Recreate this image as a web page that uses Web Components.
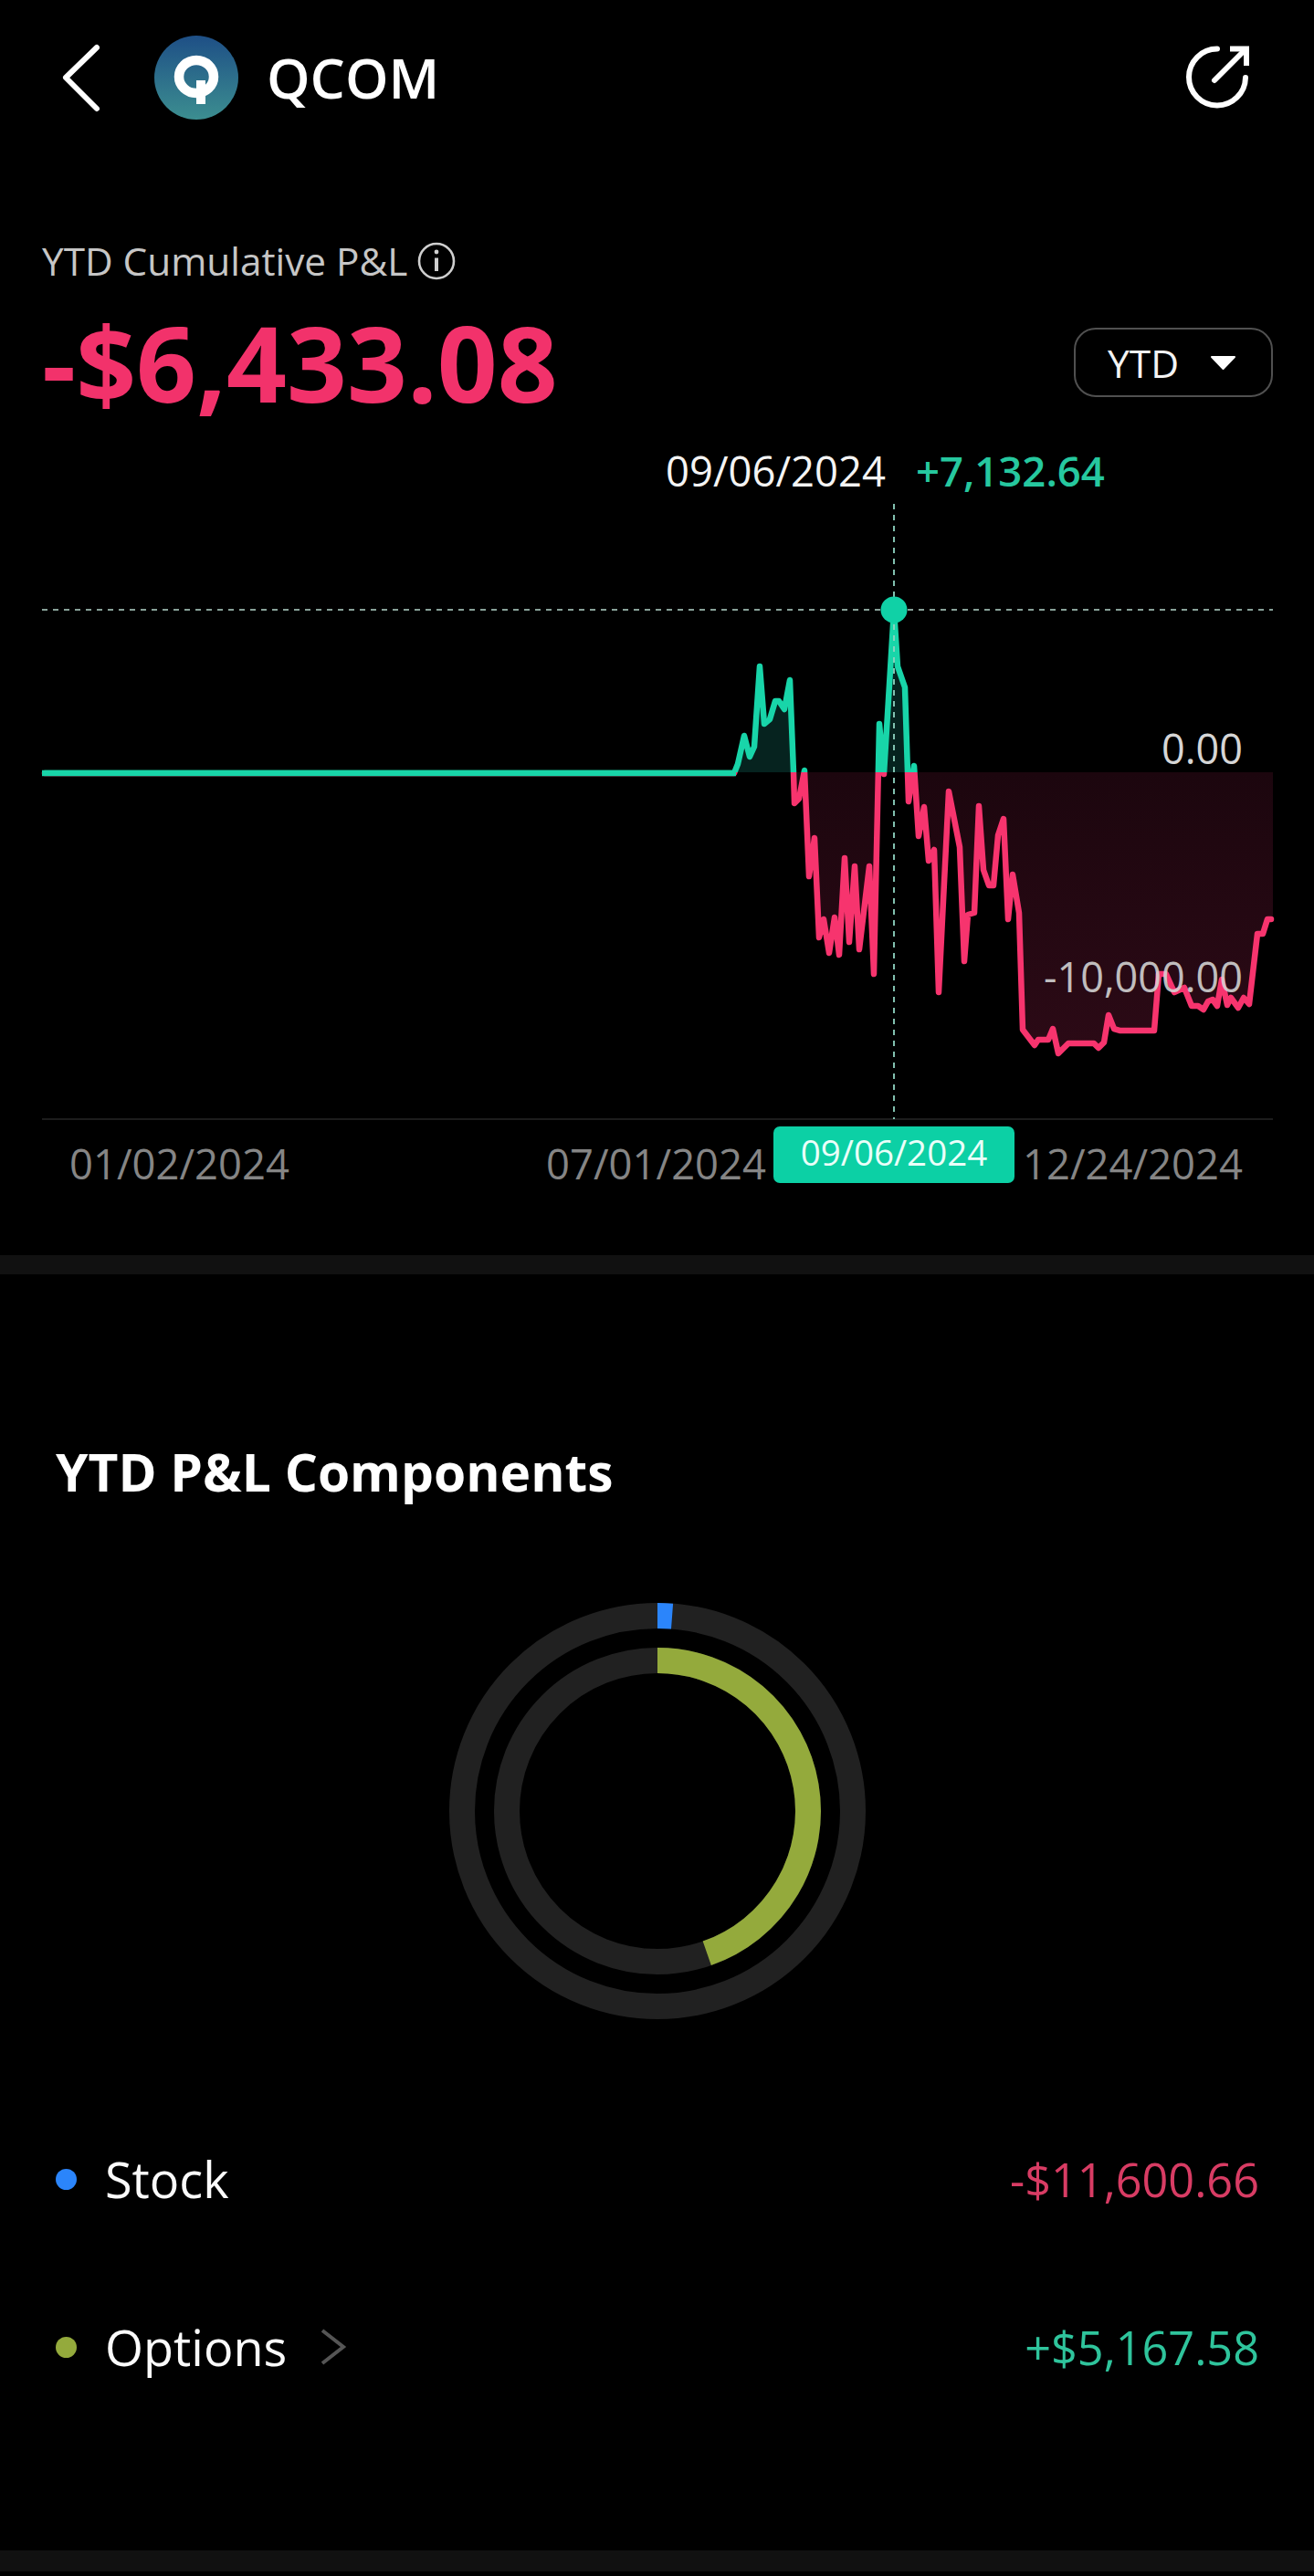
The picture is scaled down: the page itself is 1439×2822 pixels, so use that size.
<!DOCTYPE html>
<html>
<head>
<meta charset="utf-8">
<title>QCOM</title>
<style>
  html, body { margin: 0; background: #000; }
  body { font-family: "Open Sans", "Noto Sans", sans-serif; color: #fff; }
  .neg { color: #d83c64; }
  .pos { color: #2fc49c; }
</style>
</head>
<body>
<qc-header symbol="QCOM"></qc-header>
<pnl-summary label="YTD Cumulative P&amp;L" amount="-$6,433.08" range="YTD"></pnl-summary>
<pnl-chart date="09/06/2024" delta="+7,132.64"></pnl-chart>
<band-divider></band-divider>
<pnl-components title-text="YTD P&amp;L Components">
  <legend-row color="#2b85fb">
    <span slot="label">Stock</span>
    <span slot="value" class="neg">-$11,600.66</span>
  </legend-row>
  <legend-row color="#94aa3c" chevron>
    <span slot="label">Options</span>
    <span slot="value" class="pos">+$5,167.58</span>
  </legend-row>
</pnl-components>
<band-divider style="height:23px"></band-divider>

<script>
class QcHeader extends HTMLElement {
  constructor() {
    super();
    this.attachShadow({ mode: 'open' });
    this.shadowRoot.innerHTML = `
      <style>
        :host { display: flex; align-items: center; height: 170px; padding: 0 68px 0 60px; box-sizing: border-box; }
        .logo { margin-left: 49px; flex: none; }
        .sym { margin-left: 31px; font-size: 60.5px; font-weight: 600; line-height: 80px; flex: 1; }
        svg { display: block; flex: none; }
      </style>
      <svg width="60" height="80" viewBox="60 45 60 80" fill="none" stroke="#fff" stroke-width="6" stroke-linecap="round" stroke-linejoin="round">
        <path d="M106 52 L72 85 L106 119"/>
      </svg>
      <svg class="logo" width="92" height="92" viewBox="169 39 92 92">
        <defs>
          <linearGradient id="lg" x1="0" y1="0" x2="0" y2="1">
            <stop offset="0" stop-color="#1e4f86"/>
            <stop offset="1" stop-color="#3c8e90"/>
          </linearGradient>
        </defs>
        <circle cx="215" cy="85" r="46" fill="url(#lg)"/>
        <ellipse cx="215" cy="84" rx="19" ry="18" fill="none" stroke="#fff" stroke-width="10.5"/>
        <rect x="215" y="88" width="10" height="26" fill="#fff"/>
      </svg>
      <span class="sym"></span>
      <svg width="76" height="76" viewBox="1295 47 76 76" fill="none" stroke="#fff" stroke-width="6" stroke-linecap="round">
        <path d="M1333 53.5 A31 31 0 1 0 1364 85"/>
        <path d="M1330 88 L1363 55"/>
        <path d="M1347 53.5 H1365 V72" stroke-linecap="butt"/>
      </svg>`;
    this.shadowRoot.querySelector('.sym').textContent = this.getAttribute('symbol');
  }
}

class PnlSummary extends HTMLElement {
  constructor() {
    super();
    this.attachShadow({ mode: 'open' });
    this.shadowRoot.innerHTML = `
      <style>
        :host { display: block; padding: 91px 45px 0 46px; height: 292px; box-sizing: border-box; }
        .label { display: flex; align-items: center; gap: 11px; font-size: 42.3px; line-height: 50px; color: #c6c6c6; }
        .row { display: flex; align-items: center; justify-content: space-between; margin-top: 21px; height: 130px; }
        .amount { font-size: 115.4px; font-weight: 700; line-height: 130px; color: #f2326b; }
      </style>
      <div class="label">
        <span class="label-text"></span>
        <svg width="42" height="42" viewBox="0 0 42 42" fill="none" stroke="#cfcfcf" stroke-width="2.6">
          <circle cx="21" cy="21" r="19"/>
          <path d="M21 17.5 V32" stroke-width="4"/>
          <circle cx="21" cy="11" r="2.4" fill="#cfcfcf" stroke="none"/>
        </svg>
      </div>
      <div class="row">
        <span class="amount"></span>
        <range-pill></range-pill>
      </div>`;
    this.shadowRoot.querySelector('.label-text').textContent = this.getAttribute('label');
    this.shadowRoot.querySelector('.amount').textContent = this.getAttribute('amount');
    this.shadowRoot.querySelector('range-pill').textContent = this.getAttribute('range');
  }
}

class RangePill extends HTMLElement {
  constructor() {
    super();
    this.attachShadow({ mode: 'open' });
    this.shadowRoot.innerHTML = `
      <style>
        :host { display: flex; align-items: center; gap: 34px; width: 218px; height: 76px; box-sizing: border-box;
                padding-left: 35px; border: 2px solid #505050; border-radius: 24px; font-size: 42.5px; color: #f4f4f4; }
      </style>
      <slot></slot>
      <svg width="29" height="17" viewBox="0 0 29 17"><path d="M2 2 H27 L14.5 15 Z" fill="#fff" stroke="#fff" stroke-width="2" stroke-linejoin="round"/></svg>`;
  }
}

class PnlChart extends HTMLElement {
  // page coordinates of the line, read from the reference
  _points = [
    [49,847],[804,847],[808,837],[815,806],[821,829],[826,818],[832,730],[837,793],[843,788],[849,768],
    [853,768],[859,777],[865,745],[869,846],[870,880],[875,875],[881,844],[886,960],[892,918],[897,1027],
    [902,1007],[908,1044],[914,1005],[919,1046],[925,940],[930,1032],[936,949],[941,1040],[952,949],[957,1067],
    [963,793],[968,848],[979,668],[983,730],[991,753],[995,878],[1001,839],[1006,916],[1012,884],[1017,943],
    [1023,931],[1028,1087],[1039,867],[1051,928],[1056,1053],[1060,1002],[1067,1000],[1072,883],[1077,953],[1083,970],
    [1088,970],[1093,915],[1099,897],[1104,1007],[1109,958],[1116,1000],[1120,1128],[1133,1145],[1137,1139],[1148,1139],
    [1153,1127],[1159,1154],[1170,1143],[1198,1143],[1203,1148],[1209,1142],[1214,1112],[1220,1127],[1227,1129],[1264,1129],
    [1269,1067],[1277,1067],[1286,1087],[1297,1082],[1305,1102],[1312,1102],[1318,1106],[1323,1097],[1328,1095],[1333,1102],
    [1338,1073],[1344,1101],[1348,1093],[1356,1104],[1362,1093],[1368,1100],[1377,1023],[1383,1023],[1388,1007],[1392,1007]
  ];

  constructor() {
    super();
    this.attachShadow({ mode: 'open' });

    const line = this._points.map(p => p.join(',')).join(' ');
    const area = `49,846 ${line} 1394,1007 1394,846`;

    this.shadowRoot.innerHTML = `
      <style>
        :host { display: block; position: relative; height: 913px; }
        .head { display: flex; align-items: baseline; gap: 33px; height: 80px; box-sizing: border-box; padding: 26px 0 0 729px; line-height: 55px; }
        .date { font-size: 45.4px; color: #f4f4f4; }
        .delta { font-size: 45.5px; font-weight: 600; color: #26c89f; }
        svg { display: block; }
        svg text { font-family: "Open Sans", "Noto Sans", sans-serif; font-size: 45px; fill: #d6d6d6; }
        .axis { display: flex; justify-content: space-between; padding: 14px 78px 0 76px; font-size: 45.4px; line-height: 60px; color: #858585; }
        .tag { position: absolute; left: 847px; top: 772px; width: 264px; height: 62px; border-radius: 7px; background: #0cd0a5;
               display: flex; align-items: center; justify-content: center; font-size: 38.5px; color: #eafff9; padding-bottom: 6px; box-sizing: border-box; }
      </style>
      <div class="head"><span class="date"></span><span class="delta"></span></div>
      <svg width="1439" height="688" viewBox="0 542 1439 688" fill="none">
        <defs>
          <clipPath id="above"><rect x="0" y="542" width="1439" height="304"/></clipPath>
          <clipPath id="below"><rect x="0" y="846" width="1439" height="384"/></clipPath>
          <linearGradient id="redfill" gradientUnits="userSpaceOnUse" x1="0" y1="846" x2="0" y2="1154">
            <stop offset="0" stop-color="#1c060e"/>
            <stop offset="1" stop-color="#2c0a16"/>
          </linearGradient>
        </defs>
        <polygon points="${area}" fill="#06231f" clip-path="url(#above)"/>
        <polygon points="${area}" fill="url(#redfill)" clip-path="url(#below)"/>
        <path d="M46 1226 H1394" stroke="#1c1c1c" stroke-width="2"/>
        <path d="M46 668 H1394" stroke="#b5d6cc" stroke-width="1.6" stroke-dasharray="6 6"/>
        <polyline points="${line}" stroke="#18d5a9" stroke-width="6.5" stroke-linejoin="round" stroke-linecap="round" clip-path="url(#above)"/>
        <polyline points="${line}" stroke="#f7346e" stroke-width="6.5" stroke-linejoin="round" stroke-linecap="round" clip-path="url(#below)"/>
        <path d="M46 847 H806" stroke="#18d5a9" stroke-width="6.5"/>
        <path d="M979 552 V1226" stroke="#8fd4c1" stroke-width="1.8" stroke-dasharray="6 6"/>
        <circle cx="979" cy="668" r="14.5" fill="#10d1a6"/>
        <text x="1361" y="837" text-anchor="end">0.00</text>
        <text x="1361" y="1087" text-anchor="end" opacity=".88">-10,000.00</text>
      </svg>
      <div class="axis"><span>01/02/2024</span><span>07/01/2024</span><span>12/24/2024</span></div>
      <div class="tag"></div>`;

    this.shadowRoot.querySelector('.date').textContent = this.getAttribute('date');
    this.shadowRoot.querySelector('.delta').textContent = this.getAttribute('delta');
    this.shadowRoot.querySelector('.tag').textContent = this.getAttribute('date');
  }
}

class BandDivider extends HTMLElement {
  constructor() {
    super();
    this.attachShadow({ mode: 'open' });
    this.shadowRoot.innerHTML = `<style>:host { display: block; height: 21px; background: #111; }</style>`;
  }
}

class PnlComponents extends HTMLElement {
  constructor() {
    super();
    this.attachShadow({ mode: 'open' });
    this.shadowRoot.innerHTML = `
      <style>
        :host { display: block; height: 1398px; box-sizing: border-box; padding-top: 181px; }
        h2 { margin: 0 0 0 61px; font-size: 56.9px; font-weight: 700; line-height: 70px; }
        donut-chart { margin-top: 107px; }
        .legend { margin-top: 81px; }
      </style>
      <h2></h2>
      <donut-chart></donut-chart>
      <div class="legend"><slot></slot></div>`;
    this.shadowRoot.querySelector('h2').textContent = this.getAttribute('title-text');
  }
}

class DonutChart extends HTMLElement {
  constructor() {
    super();
    this.attachShadow({ mode: 'open' });

    const arc = (r, deg) => {
      const a = deg * Math.PI / 180;
      return `M0 ${-r} A${r} ${r} 0 ${deg > 180 ? 1 : 0} 1 ${(r * Math.sin(a)).toFixed(2)} ${(-r * Math.cos(a)).toFixed(2)}`;
    };

    this.shadowRoot.innerHTML = `
      <style>
        :host { display: flex; justify-content: center; }
        svg { display: block; }
      </style>
      <svg width="460" height="460" viewBox="-230 -230 460 460" fill="none" stroke-width="28">
        <circle r="214" stroke="#212121"/>
        <circle r="165" stroke="#212121"/>
        <path d="${arc(214, 4.3)}" stroke="#2b85fb"/>
        <path d="${arc(165, 160.8)}" stroke="#94aa3c"/>
      </svg>`;
  }
}

class LegendRow extends HTMLElement {
  constructor() {
    super();
    this.attachShadow({ mode: 'open' });
    this.shadowRoot.innerHTML = `
      <style>
        :host { display: flex; align-items: center; height: 184px; padding: 0 60px 0 61px; box-sizing: border-box; }
        .dot { width: 23px; height: 23px; border-radius: 50%; flex: none; margin-right: 31px; }
        .label { font-size: 54px; color: #fbfbfb; }
        .chev { margin-left: 36px; display: none; }
        :host([chevron]) .chev { display: block; }
        .value { margin-left: auto; font-size: 50.4px; }
      </style>
      <span class="dot"></span>
      <span class="label"><slot name="label"></slot></span>
      <svg class="chev" width="30" height="42" viewBox="0 0 30 42" fill="none" stroke="#555" stroke-width="4">
        <path d="M3 3 L26 21 L3 39"/>
      </svg>
      <span class="value"><slot name="value"></slot></span>`;
    this.shadowRoot.querySelector('.dot').style.background = this.getAttribute('color');
  }
}

customElements.define('qc-header', QcHeader);
customElements.define('range-pill', RangePill);
customElements.define('pnl-summary', PnlSummary);
customElements.define('pnl-chart', PnlChart);
customElements.define('band-divider', BandDivider);
customElements.define('donut-chart', DonutChart);
customElements.define('pnl-components', PnlComponents);
customElements.define('legend-row', LegendRow);
</script>
</body>
</html>
